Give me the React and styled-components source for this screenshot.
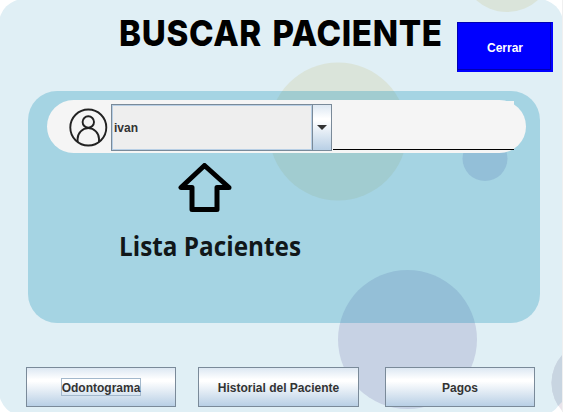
import React from "react";
import styled, { createGlobalStyle } from "styled-components";

const GlobalStyle = createGlobalStyle`
  * { box-sizing: border-box; }
  body { margin: 0; background: #fff; overflow: hidden; }
`;

const Window = styled.main`
  position: relative;
  width: 563px;
  height: 412px;
  overflow: hidden;
  background: #fff;
  border-right: 1px solid #f0f0f0;
  font: bold 12px "Liberation Sans", Arial, sans-serif;
  color: #333;
`;

const Backdrop = styled.svg`
  position: absolute;
  top: 0;
  left: 0;
`;

const Content = styled.div`
  position: relative;
  height: 100%;
  display: flex;
  flex-direction: column;
`;

const Header = styled.header`
  height: 91px;
  display: flex;
  align-items: flex-start;
  padding: 12px 9px 0 119px;
`;

const Title = styled.h1`
  margin: 0;
  width: 338px;
  font: 800 36px/42px Inter, sans-serif;
  letter-spacing: 0.7px;
  word-spacing: 3px;
  color: #000;
  white-space: nowrap;
  transform: scaleX(0.92);
  transform-origin: left;
`;

const CloseButton = styled.button`
  flex: none;
  width: 96px;
  height: 50px;
  margin-top: 10px;
  padding: 2px 0 0 1px;
  border: 1px solid #0000b2;
  border-right: 2px solid #0000ff;
  border-bottom: 2px solid #0000ff;
  box-shadow: inset -1px -1px #0000b2;
  background: #0000ff;
  color: #fff;
  font: inherit;
`;

const Panel = styled.section`
  width: 512px;
  height: 232px;
  margin-left: 28px;
  padding: 9px 14px 0 19px;
  border-radius: 29px;
  background: rgba(30, 149, 185, 0.3);
`;

const SearchBar = styled.div`
  height: 53px;
  display: flex;
  align-items: flex-start;
  padding: 1px 12px 0 22px;
  border-radius: 27px;
  background: #f5f5f5;
`;

const UserIcon = styled.svg`
  flex: none;
  width: 42px;
  height: 50px;
`;

const Combo = styled.div`
  flex: none;
  display: flex;
  width: 221px;
  height: 47px;
  margin-top: 3px;
  border: 1px solid #7a8a99;
`;

const ComboValue = styled.span`
  flex: 1;
  padding-left: 1px;
  line-height: 44px;
  border: 1px solid #b8cfe5;
  background: #eee;
`;

const ComboArrow = styled.span`
  width: 19px;
  display: grid;
  place-items: center;
  border-left: 1px solid #7a8a99;
  background: linear-gradient(#dde8f3, #fff 30%, #fff 35%, #b8cfe5);
`;

const SearchField = styled.input`
  flex: none;
  width: 181px;
  height: 49px;
  margin-left: 1px;
  padding: 0;
  border: 0;
  border-bottom: 1px solid #000;
  background: #f5f5f5;
  outline: none;
`;

const Hint = styled.div`
  margin-left: 72px;
  padding-top: 10px;
`;

const ArrowIcon = styled.svg`
  display: block;
  margin-left: 59px;
`;

const HintLabel = styled.div`
  margin-top: 14px;
  font: bold 26px/38px "Open Sans", "Noto Sans", sans-serif;
  color: #111719;
  white-space: nowrap;
  transform: scaleX(0.935);
  transform-origin: left;
`;

const Footer = styled.footer`
  display: flex;
  margin-top: 44px;
  padding-left: 26px;
`;

const ActionButton = styled.button`
  width: ${({ $width }) => $width}px;
  height: 40px;
  margin-right: ${({ $gap }) => $gap}px;
  padding: 0;
  border: 1px solid #7a8a99;
  background: linear-gradient(#dde8f3, #fff 30%, #fff 35%, #b8cfe5);
  font: inherit;
  color: #333;
`;

const ActionLabel = styled.span`
  display: inline-block;
  height: 18px;
  line-height: 18px;
  border: 1px solid ${({ $focused }) => ($focused ? "#a3b8cc" : "transparent")};
`;

const actions = [
  { label: "Odontograma", width: 150, gap: 22, focused: true },
  { label: "Historial del Paciente", width: 161, gap: 26 },
  { label: "Pagos", width: 150, gap: 0 },
];

export default function App() {
  return (
    <>
      <GlobalStyle />
      <Window>
        <Backdrop width="562" height="412" aria-hidden="true">
          <rect width="562" height="417" rx="25" transform="translate(-1 -1) scale(1.004 1)" fill="#e0eff5" />
          <circle cx="507" cy="-34" r="46" fill="#dae4da" />
          <circle cx="338" cy="131.5" r="69" fill="#dae4da" />
          <circle cx="485" cy="158.5" r="22.5" fill="#c6d2e5" />
          <circle cx="407.5" cy="339.5" r="69.5" fill="#c7d2e4" />
          <circle cx="593.5" cy="383" r="42" fill="#a892ae" fillOpacity=".25" />
          <circle cx="593.5" cy="383" r="42" fill="#c8d5e1" clipPath="url(#corner)" />
          <clipPath id="corner"><path d="M550 330H562V402L552 412H550Z" /></clipPath>
        </Backdrop>
        <Content>
          <Header>
            <Title>BUSCAR PACIENTE</Title>
            <CloseButton>Cerrar</CloseButton>
          </Header>
          <Panel>
            <SearchBar>
              <UserIcon viewBox="0 0 42 50" fill="none" stroke="#222" strokeWidth="1.9">
                <circle cx="19.3" cy="26.5" r="18" />
                <circle cx="19.3" cy="21" r="5.7" />
                <path d="M8.6 41V38A10.7 10.9 0 0 1 30 38V41" />
              </UserIcon>
              <Combo>
                <ComboValue>ivan</ComboValue>
                <ComboArrow>
                  <svg width="10" height="5"><path d="M0 0H10L5 5Z" fill="#333" /></svg>
                </ComboArrow>
              </Combo>
              <SearchField aria-label="Buscar" />
            </SearchBar>
            <Hint>
              <ArrowIcon width="54" height="50" viewBox="178 163 54 50">
                <path d="M204.5 165.5L181 187.5H192V209.5H217V187.5H229Z" fill="none" stroke="#000" strokeWidth="5" strokeLinejoin="round" />
              </ArrowIcon>
              <HintLabel>Lista Pacientes</HintLabel>
            </Hint>
          </Panel>
          <Footer>
            {actions.map(({ label, width, gap, focused }) => (
              <ActionButton key={label} $width={width} $gap={gap}>
                <ActionLabel $focused={focused}>{label}</ActionLabel>
              </ActionButton>
            ))}
          </Footer>
        </Content>
      </Window>
    </>
  );
}
